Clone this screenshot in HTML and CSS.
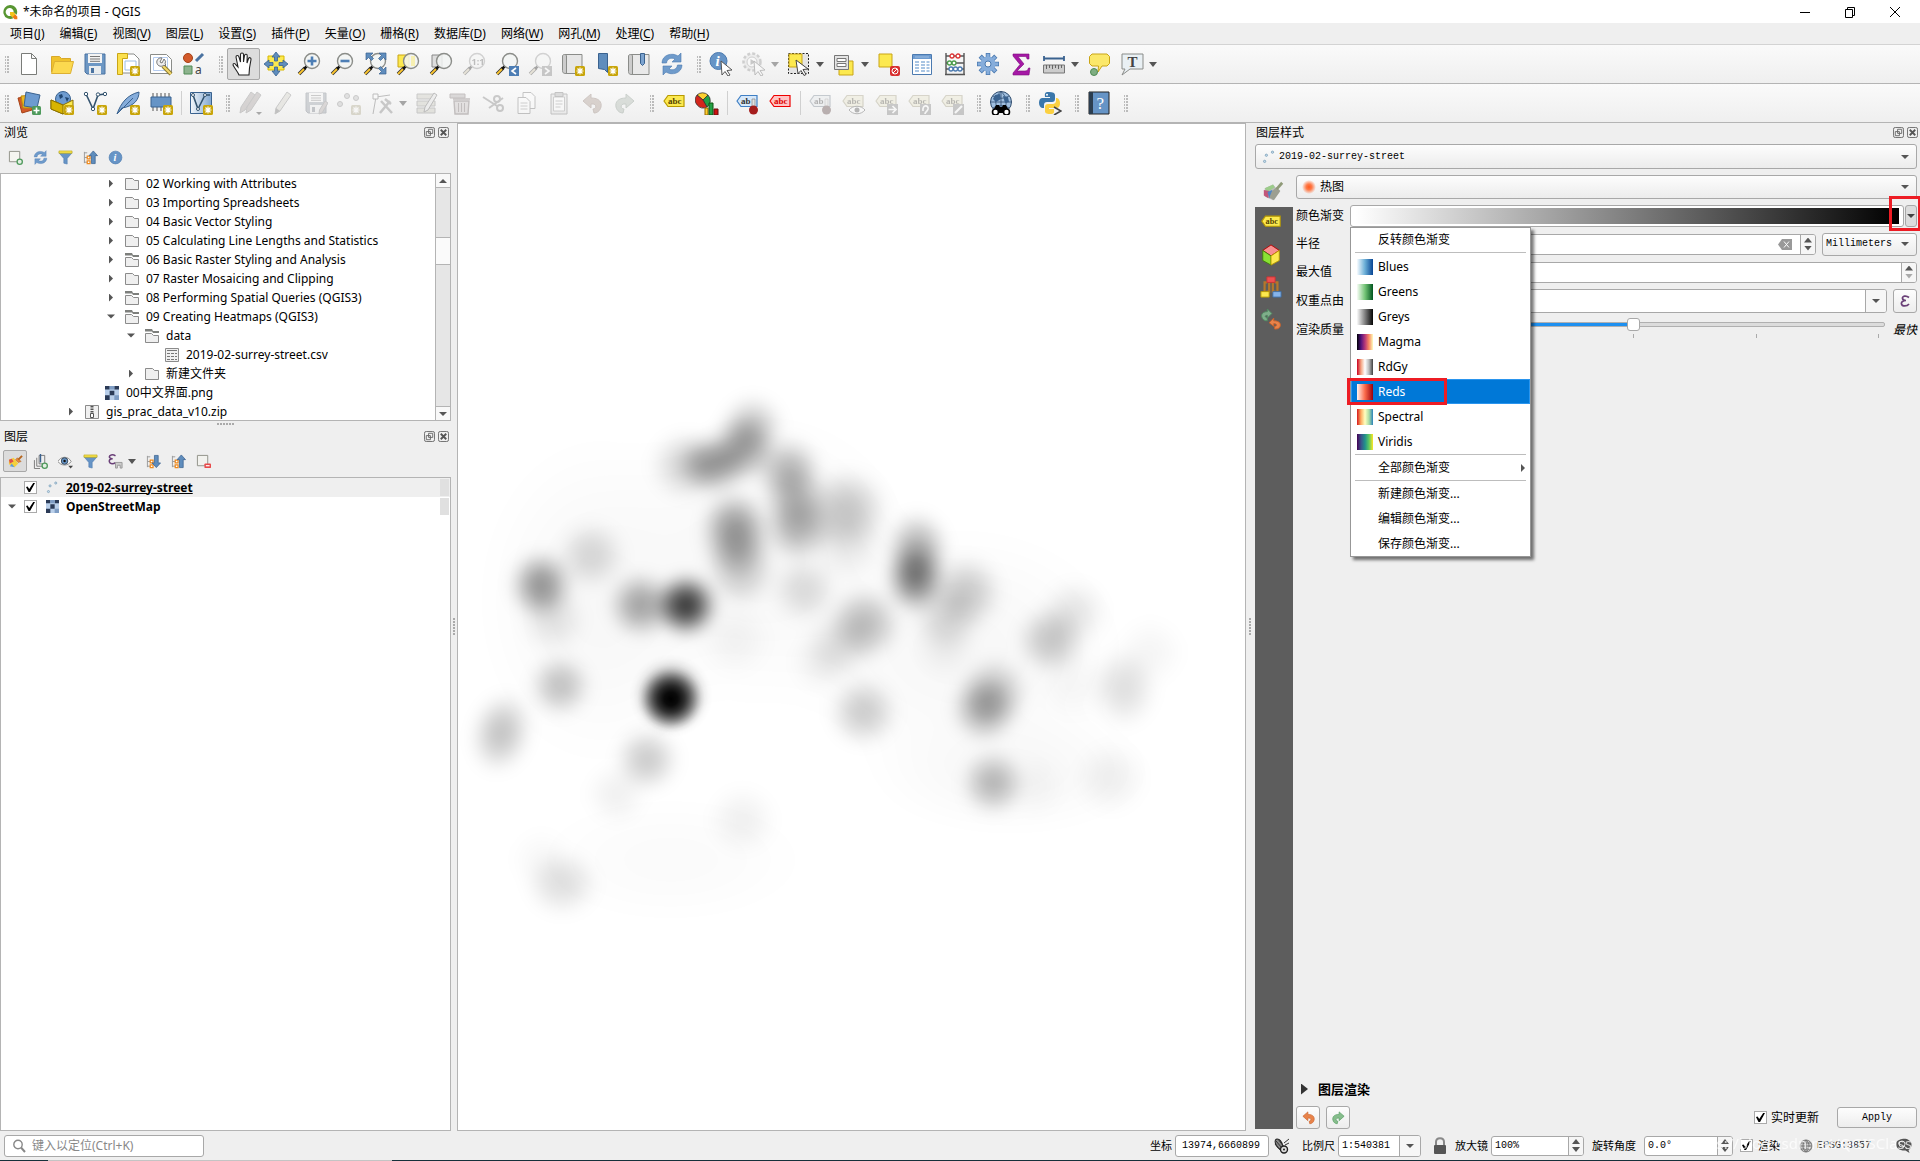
FILE: index.html
```html
<!DOCTYPE html>
<html lang="zh-CN">
<head>
<meta charset="utf-8">
<title>*未命名的项目 - QGIS</title>
<link rel="stylesheet" href="styles.css">
</head>
<body>
<svg class="defs" aria-hidden="true">
  <defs>
    <linearGradient id="g-ramp" x1="0" x2="1"><stop offset="0" stop-color="#f4f8fc"/><stop offset="1" stop-color="#7fa6d0"/></linearGradient>
    <radialGradient id="g-heat"><stop offset="0" stop-color="#ff5a1e"/><stop offset=".4" stop-color="#ff7a48"/><stop offset="1" stop-color="#ff7a48" stop-opacity="0"/></radialGradient>
    <radialGradient id="k">
      <stop offset="0" stop-opacity="1"/><stop offset=".2" stop-opacity=".92"/><stop offset=".4" stop-opacity=".7"/><stop offset=".5" stop-opacity=".55"/><stop offset=".6" stop-opacity=".4"/><stop offset=".7" stop-opacity=".25"/><stop offset=".8" stop-opacity=".12"/><stop offset=".9" stop-opacity=".035"/><stop offset="1" stop-opacity="0"/>
    </radialGradient>
    <filter id="soft" x="-10%" y="-10%" width="120%" height="120%"><feGaussianBlur stdDeviation="7"/></filter>
  </defs>
</svg>
<svg class="sprite" aria-hidden="true">
  <symbol id="badge" viewBox="0 0 24 24"><rect x="14" y="14" width="10" height="10" rx="1.500" fill="#c8a50a"/><path d="M19 15.500v7M15.500 19h7M16.500 16.500l5 5M21.500 16.500l-5 5" stroke="#fff" stroke-width="1.200"/></symbol>
  <symbol id="lens" viewBox="0 0 24 24"><path d="M2 22l6-6" stroke="#333" stroke-width="3.600"/><path d="M2 22l6-6" stroke="#fcc62f" stroke-width="1.800"/><path d="M7 17l3-3" stroke="#111" stroke-width="2.500"/><circle cx="15" cy="9" r="7.500" fill="#f2f4f3" fill-opacity=".85" stroke="#8b8d89" stroke-width="1.400"/></symbol>
  <symbol id="tag" viewBox="0 0 24 24"><path d="M2 10l4-5.500h16v11H6z" stroke-width="1.200"/></symbol>
  <symbol id="i-logo" viewBox="0 0 24 24"><path d="M12 1.500A10.500 10.500 0 1 0 17 21.500L14 17.500A6 6 0 1 1 17.500 12.500L22 16A10.500 10.500 0 0 0 12 1.500z" fill="#589632"/><path d="M12 12h5l6 7v4h-4l-7-7z" fill="#ee7913"/><path d="M12 12h5l3 3.500-4.500 4.500L12 16z" fill="#f0c419"/></symbol>
  <symbol id="i-new" viewBox="0 0 24 24"><path d="M4.500 1.500h10l5 5v16h-15zM14.500 1.500v5h5" fill="#fff" stroke="#7a7c79"/></symbol>
  <symbol id="i-open" viewBox="0 0 24 24"><path d="M1.500 20V4.500h8l2 2h9V10" fill="#f0c22c" stroke="#d8a92a"/><path d="M1.500 21.500l3-12h19l-3 12z" fill="#fcd94f" stroke="#dcb033"/></symbol>
  <symbol id="i-save" viewBox="0 0 24 24"><path d="M2 2h20v20H4l-2-2z" fill="#6d97c4" stroke="#4b73a1"/><path d="M5 2h14v9H5z" fill="#f4f4f4"/><path d="M7 4.500h10M7 7h10M7 9.300h10" stroke="#777"/><path d="M6 14h12v8H6z" fill="#e9ecee"/><path d="M8 16h3v5H8z" fill="#4b73a1"/></symbol>
  <symbol id="i-layout" viewBox="0 0 24 24"><path d="M4 2h14l5 5v14H4z" fill="#fff" stroke="#8a8c89"/><path d="M9 9h11v9H9z" fill="none" stroke="#9ebee0"/><path d="M1.500 1.500h10v5h-5v16h-5z" fill="#fbe04e" stroke="#c9a516"/><use href="#badge"/></symbol>
  <symbol id="i-layoutmgr" viewBox="0 0 24 24"><path d="M1.500 2.500h16l5 5v14h-21z" fill="#fff" stroke="#8a8c89"/><path d="M4.500 5.500h14v13h-14z" fill="none" stroke="#b5ccf0"/><path d="M14 14l8 8" stroke="#8a7a30" stroke-width="4"/><path d="M14 14l8 8" stroke="#f2d66a" stroke-width="2.200"/><path d="M13 6a4.200 4.200 0 1 0 2 7l1 1 1-1-1-1a4 4 0 0 0-1-5l-2 4-2-1z" fill="#eee" stroke="#777"/></symbol>
  <symbol id="i-style" viewBox="0 0 24 24"><circle cx="6" cy="6" r="4.500" fill="#d35a2a" stroke="#a54216"/><path d="M14 9l7-7" stroke="#4b73a1" stroke-width="3"/><path d="M2 14h8v8H2z" fill="#8db38d" stroke="#4f8a55"/><text x="13" y="22" font-size="12" font-family="Noto Sans" fill="#444">a</text></symbol>
  <symbol id="i-hand" viewBox="0 0 24 24"><path d="M8 23c-1-3-4-6-6-10 0-2 2-2 3 0l2 2L5 5c0-2 2.500-2 3 0l1.500 5V2.500c0-2 3-2 3 0V10l1-6.500c.5-2 3-1.500 2.700.5L16 11l1.500-4.500c.7-1.500 2.700-1 2.500 1L18.500 16 18 23z" fill="#fff" stroke="#222" stroke-width="1.100"/></symbol>
  <symbol id="i-panto" viewBox="0 0 24 24"><path d="M4 4h16v14H4z" fill="#fce94f" stroke="#d8b800"/><path d="M12 0l4 5h-2.500v4h-3V5H8zM12 24l4-5h-2.500v-4h-3v4H8zM0 12l5-4v2.500h4v3H5V16zM24 12l-5-4v2.500h-4v3h4V16z" fill="#5f8dbd" stroke="#3a628f" stroke-width=".8"/></symbol>
  <symbol id="i-zoomin" viewBox="0 0 24 24"><use href="#lens"/><path d="M15 4.500v9M10.500 9h9" stroke="#4d7eb5" stroke-width="2.600"/></symbol>
  <symbol id="i-zoomout" viewBox="0 0 24 24"><use href="#lens"/><path d="M10.500 9h9" stroke="#4d7eb5" stroke-width="2.600"/></symbol>
  <symbol id="i-zoomfull" viewBox="0 0 24 24"><use href="#lens"/><path d="M3 1h7L7.500 3.500l3 3-2 2-3-3L3 8zM23 1h-7l2.500 2.500-3 3 2 2 3-3L23 8zM23 22h-7l2.500-2.500-3-3 2-2 3 3L23 15z" fill="#5f8dbd" stroke="#3a628f" stroke-width=".7"/></symbol>
  <symbol id="i-zoomsel" viewBox="0 0 24 24"><path d="M2 3h11v12H2z" fill="#fce94f" stroke="#c9a516"/><use href="#lens"/><path d="M15 4h4v10h-4z" fill="#fce94f" opacity=".4"/></symbol>
  <symbol id="i-zoomlayer" viewBox="0 0 24 24"><path d="M3 3h10v12H3z" fill="#ddd" stroke="#888"/><use href="#lens"/></symbol>
  <symbol id="i-zoom11" viewBox="0 0 24 24"><use href="#lens"/><text x="9.500" y="12.500" font-size="9" font-weight="700" font-family="Noto Sans" fill="#555">1:1</text></symbol>
  <symbol id="i-zoomlast" viewBox="0 0 24 24"><use href="#lens"/><path d="M14 14h10v10H14z" fill="#4d7eb5"/><path d="M21 16l-4 3 4 3" fill="none" stroke="#fff" stroke-width="1.600"/></symbol>
  <symbol id="i-zoomnext" viewBox="0 0 24 24"><use href="#lens"/><path d="M14 14h10v10H14z" fill="#777"/><path d="M17 16l4 3-4 3" fill="none" stroke="#fff" stroke-width="1.600"/></symbol>
  <symbol id="i-mapview" viewBox="0 0 24 24"><path d="M4 2.500h17v19H4z" fill="#e6e6e6" stroke="#8a8c89"/><path d="M1.500 4c0-2 4-2 4 0v17.500c-2 0-4 0-4-3z" fill="#ccc" stroke="#8a8c89"/><use href="#badge"/></symbol>
  <symbol id="i-bookmark" viewBox="0 0 24 24"><path d="M4.500 1.500h9v19l-3-3-6-1z" fill="#5f8dbd" stroke="#3a628f"/><use href="#badge"/></symbol>
  <symbol id="i-bookmarks" viewBox="0 0 24 24"><path d="M4 2.500h18v20H4z" fill="#e9e9e9" stroke="#8a8c89"/><path d="M1.500 4c0-2 4-2 4 0v18.500c-2 0-4 0-4-3z" fill="#ccc" stroke="#8a8c89"/><path d="M13.500 1.500h4v10l-2 2-2-2z" fill="#7ca3cf" stroke="#3a628f"/></symbol>
  <symbol id="i-refresh" viewBox="0 0 24 24"><path d="M2 11C2 3 12 0 18 4l3-3v9h-9l3-3C11 5 7 7 6.500 11z" fill="#6f9bcb" stroke="#4b7ab0" stroke-width=".6"/><path d="M22 13c0 8-10 11-16 7l-3 3v-9h9l-3 3c4 2 8 0 8.500-4z" fill="#6f9bcb" stroke="#4b7ab0" stroke-width=".6"/></symbol>
  <symbol id="cursor" viewBox="0 0 24 24"><path d="M12 9l11 9-5 .5 3 4.500-2 1-3-4.500-3 3.500z" fill="#fff" stroke="#555"/></symbol>
  <symbol id="i-identify" viewBox="0 0 24 24"><circle cx="9.500" cy="9" r="8.500" fill="#6694c6" stroke="#4b7ab0"/><text x="6.500" y="14" font-size="15" font-style="italic" font-weight="700" font-family="Liberation Serif" fill="#fff">i</text><use href="#cursor"/></symbol>
  <symbol id="i-gear" viewBox="0 0 24 24"><path d="M12 1v22M1 12h22M4.200 4.200l15.600 15.600M19.800 4.200L4.200 19.800" stroke="#4b7ab0" stroke-width="4.500"/><path d="M12 1.700v20.600M1.700 12h20.600M4.700 4.700l14.600 14.600M19.300 4.700L4.700 19.300" stroke="#86addb" stroke-width="3"/><circle cx="12" cy="12" r="7.500" fill="#86addb"/><circle cx="12" cy="12" r="3" fill="#f5f5f5" stroke="#4b7ab0"/></symbol>
  <symbol id="i-action" viewBox="0 0 24 24"><circle cx="10" cy="10" r="8.500" fill="#ddd" stroke="#888" stroke-width="2.500" stroke-dasharray="3 2"/><circle cx="10" cy="10" r="5" fill="#fff" stroke="#888"/><path d="M8.500 7l5 3-5 3z" fill="#777"/><use href="#cursor"/></symbol>
  <symbol id="i-select" viewBox="0 0 24 24"><path d="M1.500 1.500h20v20h-20z" fill="#e4e4e4" stroke="#222" stroke-dasharray="2 1.500"/><path d="M2 2h13v13H2z" fill="#fce94f" stroke="#c9a516"/><path d="M9 8l12 9-5 .5 3 5-2 1-3-5-3 3z" fill="#fff" stroke="#444"/></symbol>
  <symbol id="i-selform" viewBox="0 0 24 24"><path d="M7 9h14v14H7z" fill="#fce94f" stroke="#c9a516"/><path d="M2.500 3.500h14v14h-14z" fill="#e4e4e4" stroke="#777"/><path d="M5 6.500h9v3H5zM5 11.500h9v3H5z" fill="#fff" stroke="#777"/></symbol>
  <symbol id="i-deselect" viewBox="0 0 24 24"><path d="M2 2h13v13H2z" fill="#fce94f" stroke="#c9a516"/><rect x="13" y="14" width="10" height="10" rx="2" fill="#d83030"/><circle cx="18" cy="19" r="3" fill="none" stroke="#fff"/><path d="M16 21l4-4" stroke="#fff"/></symbol>
  <symbol id="i-table" viewBox="0 0 24 24"><path d="M2.500 2.500h19v20h-19z" fill="#fff" stroke="#4b7ab0"/><path d="M3 3h18v4H3z" fill="#6d9bd0"/><path d="M5 10h4M11 10h4M16.500 10h3M5 13h4M11 13h4M16.500 13h3M5 16h4M11 16h4M16.500 16h3M5 19h4M11 19h4M16.500 19h3M5 5h14" stroke="#8db2da" stroke-width="1.400"/></symbol>
  <symbol id="i-abacus" viewBox="0 0 24 24"><path d="M3 1v21M21 1v21M2 22.500h20M3 4h18M3 11h18M3 17h18" stroke="#555" stroke-width="1.400"/><g fill="#fff" stroke-width="1.300"><g stroke="#d33"><circle cx="9" cy="4" r="2"/><circle cx="15" cy="4" r="2"/></g><g stroke="#4a9c4a"><circle cx="6.500" cy="11" r="2"/><circle cx="11" cy="11" r="2"/></g><g stroke="#4b7ab0"><circle cx="8" cy="17" r="2"/><circle cx="12.500" cy="17" r="2"/><circle cx="17" cy="17" r="2"/></g></g></symbol>
  <symbol id="i-sigma" viewBox="0 0 24 24"><path d="M4 2h16v5h-2c0-2-1-2.500-3-2.500H9L15 12l-7 7h8c2 0 3-1 3.500-3H21l-1 7H4v-2l7-8.500L4 4z" fill="#a518a5" stroke="#7c0d7c" stroke-width=".6"/></symbol>
  <symbol id="i-measure" viewBox="0 0 24 24"><path d="M2 6.500h20M2 4v5M22 4v5" stroke="#3a628f" stroke-width="1.800"/><path d="M1.500 13h21v8h-21z" fill="#ccc" stroke="#777"/><path d="M4.500 13v4M7.500 13v3M10.500 13v4M13.500 13v3M16.500 13v4M19.500 13v3" stroke="#666"/></symbol>
  <symbol id="i-tip" viewBox="0 0 24 24"><path d="M5 2h15l2.500 2.500v7L20 14h-5l-4 6 .5-6H5l-2.500-2.500v-7z" fill="#fbe86a" stroke="#c9a516"/><circle cx="7" cy="20" r="3.500" fill="#7fae82" stroke="#4f8a55"/></symbol>
  <symbol id="i-text" viewBox="0 0 24 24"><path d="M2 2h21v15H10l-8 6 3-6H2z" fill="#e9f0f4" stroke="#8a8c89"/><text x="7.500" y="15" font-size="15" font-weight="700" font-family="Liberation Serif" fill="#444">T</text></symbol>
  <symbol id="i-source" viewBox="0 0 24 24"><path d="M1 7l12-2 2 14-10 3z" fill="#d35a2a" stroke="#a54216"/><path d="M4 5l13-1v13H6z" fill="#f0b820" stroke="#b98a10"/><path d="M9 1l14 3-3 13-13-2z" fill="#6d9bd0" stroke="#3a628f"/><rect x="15" y="15" width="9" height="9" rx="1.500" fill="#4f9a5c"/><path d="M19.500 16.500v6M16.500 19.500h6" stroke="#fff" stroke-width="1.600"/></symbol>
  <symbol id="i-gpkg" viewBox="0 0 24 24"><circle cx="13" cy="8" r="7.500" fill="#6d9bd0" stroke="#3a628f"/><path d="M9 4l3-1 1 3-3 2zM15 6l4 1-2 4z" fill="#1f4570"/><path d="M1 9l12 5 10-5v8l-10 6-12-5z" fill="#fce94f" stroke="#8a7000"/><path d="M1 9l12 5v9L1 18z" fill="#d8b400" stroke="#8a7000"/><use href="#badge"/></symbol>
  <symbol id="i-shape" viewBox="0 0 24 24"><path d="M3 3l7 15 5-14 7-1" fill="none" stroke="#33536e" stroke-width="1.600"/><g fill="#fff" stroke="#33536e"><circle cx="3" cy="3" r="1.700"/><circle cx="10" cy="18" r="1.700"/><circle cx="15" cy="3.500" r="1.700"/><circle cx="22" cy="3" r="1.700"/></g><use href="#badge"/></symbol>
  <symbol id="i-feather" viewBox="0 0 24 24"><path d="M1 23C5 12 11 4 23 1c0 7-4 14-17 16z" fill="#86addb" stroke="#3a628f"/><path d="M1 23L17 7" stroke="#3a628f"/><use href="#badge"/></symbol>
  <symbol id="i-chip" viewBox="0 0 24 24"><path d="M4 2v18M8 2v18M12 2v18M16 2v18M20 2v18" stroke="#555"/><path d="M2 6h20v10H2z" fill="#6694c6" stroke="#3a628f"/><use href="#badge"/></symbol>
  <symbol id="i-virtual" viewBox="0 0 24 24"><path d="M1.500 1.500h21v21h-21z" fill="url(#g-ramp)" stroke="#3a628f"/><path d="M4 4l5 14 7-14 5 0" fill="none" stroke="#33536e" stroke-width="1.600"/><g fill="#fff" stroke="#33536e"><circle cx="4" cy="4" r="1.500"/><circle cx="9" cy="18" r="1.500"/><circle cx="16" cy="4" r="1.500"/></g><use href="#badge"/></symbol>
  <symbol id="i-pencil" viewBox="0 0 24 24"><path d="M16 1l4 3-11 16-5 3 1-6z" fill="#d8cf9a" stroke="#777"/><path d="M4 23l1-6 4 3z" fill="#666"/></symbol>
  <symbol id="i-pencils" viewBox="0 0 24 24"><path d="M13 1l4 3-10 15-5 3 1-6z" fill="#b98f86" stroke="#777"/><path d="M19 1l4 3-10 15-5 3 1-6z" fill="#b98f86" stroke="#777"/><path d="M18 21h6l-3 3z" fill="#222"/></symbol>
  <symbol id="i-saveedit" viewBox="0 0 24 24"><use href="#i-save"/><path d="M21 10l3 2-6 10-3 1 .5-4z" fill="#c79a92" stroke="#777"/></symbol>
  <symbol id="i-points" viewBox="0 0 24 24"><g fill="#bbb" stroke="#777"><circle cx="3" cy="13" r="2.500"/><circle cx="10" cy="5" r="2.500"/><circle cx="19" cy="7" r="2.500"/></g><use href="#badge"/></symbol>
  <symbol id="i-vertex" viewBox="0 0 24 24"><path d="M3 23L6 6 20 4" fill="none" stroke="#555"/><path d="M3 3h5v5H3z" fill="#fff" stroke="#555"/><path d="M10 22L20 10M11 10l11 12M15 8l6 5" stroke="#777" stroke-width="2.500"/></symbol>
  <symbol id="i-multi" viewBox="0 0 24 24"><path d="M2 3h18v5H2zM2 10h18v5H2zM2 17h18v5H2z" fill="#c9c48a" stroke="#777"/><path d="M19 2l3 2-9 15-4 2 1-5z" fill="#ddd" stroke="#555"/></symbol>
  <symbol id="i-delete" viewBox="0 0 24 24"><path d="M2 3h15v4H2z" fill="#b99" stroke="#855"/><path d="M6 10h15l-1 13H7zM5 8h17" fill="#d8b6b6" stroke="#855" stroke-width="1.400"/><path d="M10.500 12v9M13.500 12v9M16.500 12v9" stroke="#855"/></symbol>
  <symbol id="i-cut" viewBox="0 0 24 24"><path d="M2 6l14 9M8 17l14-10" stroke="#777" stroke-width="2"/><circle cx="19" cy="17" r="3" fill="none" stroke="#777" stroke-width="2"/><circle cx="16" cy="8" r="3" fill="none" stroke="#777" stroke-width="2"/></symbol>
  <symbol id="i-copy" viewBox="0 0 24 24"><path d="M9 1.500h8l4 4v12H9z" fill="#fff" stroke="#666"/><path d="M4 6.500h8l4 4v12H4z" fill="#fff" stroke="#666"/><path d="M6.500 12h7M6.500 15h7M6.500 18h7" stroke="#888"/></symbol>
  <symbol id="i-paste" viewBox="0 0 24 24"><path d="M4 3h16v20H4z" fill="#ddd" stroke="#666"/><path d="M6.500 6h11v14h-11z" fill="#fff" stroke="#888"/><path d="M8 1.500h8v4H8z" fill="#aaa" stroke="#666"/><path d="M8.500 10h7M8.500 13h7M8.500 16h5" stroke="#888"/></symbol>
  <symbol id="i-undo" viewBox="0 0 24 24"><path d="M3 10l8-7v4c8 0 11 4 10 9-1 4-4 6-7 6l-1-4c4 0 4-6-2-5v4z" fill="#e8834a" stroke="#c9612a"/></symbol>
  <symbol id="i-redo" viewBox="0 0 24 24"><path d="M21 10l-8-7v4C5 7 2 11 3 16c1 4 4 6 7 6l1-4c-4 0-4-6 2-5v4z" fill="#86bd8c" stroke="#4f9a5c"/></symbol>
  <symbol id="i-label" viewBox="0 0 24 24"><use href="#tag" fill="#fce94f" stroke="#b89a00"/><text x="6" y="13" font-size="9" font-weight="700" font-family="Liberation Serif" fill="#554400">abc</text></symbol>
  <symbol id="i-diagram" viewBox="0 0 24 24"><path d="M8 9L2 4a8 8 0 0 1 11 0z" fill="#fcd02f" stroke="#333" stroke-width=".8"/><path d="M8 9l5-5a8 8 0 0 1-1 12z" fill="#22a045" stroke="#333" stroke-width=".8"/><path d="M8 9l4 7A8 8 0 0 1 2 4z" fill="#d3261c" stroke="#333" stroke-width=".8"/><path d="M10 17h3v7h-3z" fill="#fcd02f" stroke="#960"/><path d="M14 12h4v12h-4z" fill="#22a045" stroke="#151"/><path d="M19 18h4v6h-4z" fill="#c11" stroke="#611"/></symbol>
  <symbol id="i-pin" viewBox="0 0 24 24"><use href="#tag" fill="#d6e8fa" stroke="#3f7fc4"/><text x="6" y="13" font-size="9" font-weight="700" font-family="Liberation Serif" fill="#333">ab</text><path d="M17 8h3v8h-3z" fill="#e0e0e0" stroke="#777" stroke-width=".6"/><circle cx="18.500" cy="19" r="4.500" fill="#a51d1d"/></symbol>
  <symbol id="i-unplaced" viewBox="0 0 24 24"><use href="#tag" fill="#ffc4c4" stroke="#e00"/><text x="6" y="13" font-size="9" font-weight="700" font-family="Liberation Serif" fill="#d00">abc</text></symbol>
  <symbol id="i-lshow" viewBox="0 0 24 24"><use href="#i-label"/><path d="M8 19c4-5 12-5 16 0-4 5-12 5-16 0z" fill="#fff" stroke="#444"/><circle cx="16" cy="19" r="2.500" fill="#444"/></symbol>
  <symbol id="i-lmove" viewBox="0 0 24 24"><use href="#i-label"/><path d="M13 13h11v11H13z" fill="#777"/><path d="M14.500 18.500h7M18.500 15l3.500 3.500-3.500 3.500" fill="none" stroke="#fff" stroke-width="1.700"/></symbol>
  <symbol id="i-lrot" viewBox="0 0 24 24"><use href="#i-label"/><path d="M13 13h11v11H13z" fill="#777"/><path d="M16 20c-1-7 6-6 5-2-1 3-3 3-3 5" fill="none" stroke="#fff" stroke-width="1.700"/></symbol>
  <symbol id="i-ledit" viewBox="0 0 24 24"><use href="#i-label"/><path d="M13 13h11v11H13z" fill="#777"/><path d="M15 22l7-7" stroke="#fff" stroke-width="2.200"/></symbol>
  <symbol id="i-globe" viewBox="0 0 24 24"><circle cx="12" cy="11" r="10.500" fill="#9fbfe0" stroke="#2d4a6c"/><path d="M12 .5v21M2 11h20M4 5c5 3 11 3 16 0M4 17c5-3 11-3 16 0M12 .5c-7 6-7 15 0 21M12 .5c7 6 7 15 0 21" stroke="#2d4a6c" fill="none" stroke-width=".8"/><path d="M6 4l5-1 1 5-5 3-3-3zM14 5l5 1 1 5-4 1z" fill="#3a628f"/><path d="M3 22l4-8h3l1 2h2l1-2h3l4 8z" fill="#000"/><circle cx="6.500" cy="21" r="3" fill="#fff" stroke="#000" stroke-width="1.600"/><circle cx="17.500" cy="21" r="3" fill="#fff" stroke="#000" stroke-width="1.600"/></symbol>
  <symbol id="i-python" viewBox="0 0 24 24"><path d="M11 1c-5 0-4 2-4 5h5v1H4c-4 0-4 9 0 10h2v-3c0-2 1-3 3-3h5c2 0 3-1 3-3V4c0-2-2-3-6-3z" fill="#3a77ab"/><path d="M12 23c5 0 4-2 4-5h-5v-1h8c4 0 4-9 0-10h-1v3c0 2-2 3-3 3h-5c-2 0-3 1-3 3v4c0 2 1 3 5 3z" fill="#fbd040"/><circle cx="9" cy="3.800" r="1" fill="#fff"/><path d="M16 16l7 4-7 4" fill="none" stroke="#444" stroke-width="1.600"/></symbol>
  <symbol id="i-help" viewBox="0 0 24 24"><path d="M2 1h20v22H2z" fill="#6694c6" stroke="#222"/><path d="M2 1h4v22H2z" fill="#2c3e50"/><text x="9.500" y="18" font-size="17" font-family="Liberation Serif" fill="#fff">?</text></symbol>
  <symbol id="i-addlayer" viewBox="0 0 16 16"><path d="M1.500 1.500h11v11h-11z" fill="#f5f5f0" stroke="#8f9086"/><circle cx="12.500" cy="12.500" r="2.800" fill="#e4efe4" stroke="#4f9a5c" stroke-width="1.400"/></symbol>
  <symbol id="i-filter" viewBox="0 0 16 16"><path d="M1 3h14L9.800 9v6l-3.600-1V9z" fill="#6694c6" stroke="#4b7ab0" stroke-width=".6"/><path d="M1 1h14v2.500H1z" fill="#f5e04a" stroke="#b9a516" stroke-width=".6"/></symbol>
  <symbol id="i-collapse" viewBox="0 0 16 16"><path d="M1.500 2v12M1.500 3h3M1.500 8h3M1.500 13h3" stroke="#999"/><path d="M4.500 6.500h3v3h-3zM4.500 11.500h3v3h-3z" fill="#fff" stroke="#f08a1c" stroke-width="1.300"/><path d="M11 1l4.500 5H13v8.500H9V6H6.500z" fill="#5f8dbd" stroke="#3a628f" stroke-width=".8"/></symbol>
  <symbol id="i-expand" viewBox="0 0 16 16"><path d="M1.500 2v12M1.500 3h3M1.500 8h3M1.500 13h3" stroke="#999"/><path d="M4.500 6.500h3v3h-3zM4.500 11.500h3v3h-3z" fill="#fff" stroke="#f08a1c" stroke-width="1.300"/><path d="M11 14.500l4.500-5H13V1.500H9v8H6.500z" fill="#5f8dbd" stroke="#3a628f" stroke-width=".8"/></symbol>
  <symbol id="i-info" viewBox="0 0 16 16"><circle cx="8" cy="8" r="6.800" fill="#6694c6" stroke="#4b7ab0" stroke-width=".7"/><text x="5.800" y="12" font-size="11" font-style="italic" font-weight="700" font-family="Liberation Serif" fill="#fff">i</text></symbol>
  <symbol id="i-brush" viewBox="0 0 16 16"><path d="M1 6l5-2 5 6-4 4-6-3z" fill="#f4d03c"/><path d="M1 6l3-1 2 3-4 2z" fill="#e0504a"/><path d="M4 10l3 4-5-1z" fill="#5f9bd6"/><path d="M8 6l3 3 3-1-4-4z" fill="#e88a3a" stroke="#a85a1a" stroke-width=".5"/><path d="M11 6l4-4" stroke="#b5651d" stroke-width="2"/></symbol>
  <symbol id="i-paint" viewBox="0 0 24 24"><path d="M3 9l9-4 7 8-7 9-9-4z" fill="#bbb"/><path d="M3 9l9-4 2 3-8 5z" fill="#9ccc8a"/><path d="M2 11l6 1-1 8-5-3z" fill="#c2577a"/><path d="M6 13l5-2 2 5-5 4z" fill="#4f86c6"/><path d="M11 12l5-4 4 4-7 10-5-3z" fill="#9c9f92"/><path d="M16 10l6-7" stroke="#8f9a78" stroke-width="3"/></symbol>
  <symbol id="i-group" viewBox="0 0 16 16"><path d="M6.500 1.500h6v9h-6zM4 4v9h6M1.500 6.500v9h6" fill="none" stroke="#777"/><path d="M8 0v9" stroke="#3a628f" stroke-width="1.500"/><circle cx="12.500" cy="12.500" r="2.800" fill="#e4efe4" stroke="#4f9a5c" stroke-width="1.400"/></symbol>
  <symbol id="i-eye" viewBox="0 0 16 16"><path d="M0 8c3-6 11-6 14 0-3 5-11 5-14 0z" fill="#fff" stroke="#888"/><circle cx="7" cy="7.500" r="3.500" fill="#6694c6" stroke="#345"/><circle cx="7" cy="7.500" r="1.300" fill="#111"/><path d="M11 12.500h5l-2.500 3z" fill="#444"/></symbol>
  <symbol id="i-expr" viewBox="0 0 16 16"><path d="M8 2C5 0 1 1 1.500 3.500 2 5 4 5 5 5 2 5 1 6.500 1.500 8.500 2 11 6 11 8 9" fill="none" stroke="#6a4078" stroke-width="1.600"/><path d="M8 9h7v6h-2v-3h-3v3H8z" fill="#ccc" stroke="#999"/></symbol>
  <symbol id="i-remove" viewBox="0 0 16 16"><path d="M1.500 1.500h11v11h-11z" fill="#f2f2ee" stroke="#8f9086"/><rect x="9" y="10" width="7" height="5" rx="1" fill="#e84a4a"/><path d="M10.500 12.500h4" stroke="#fff" stroke-width="1.300"/></symbol>
  <symbol id="i-folder" viewBox="0 0 14 14"><path d="M.5 1.500h7l2 2h4v9H.5z" fill="#efefef" stroke="#8b8b8b"/></symbol>
  <symbol id="i-folderfull" viewBox="0 0 14 14"><path d="M0 0h7l1 2h6v2H8L7 2.500H0z" fill="#7d7f7c"/><path d="M.5 4.500h6l2 2h5v7H.5z" fill="#efefef" stroke="#8b8b8b"/></symbol>
  <symbol id="i-csv" viewBox="0 0 14 14"><path d="M.5.5h13v13H.5z" fill="#f0f0f0" stroke="#8b8b8b"/><path d="M2 2.500h10M2 5.500h3M6 5.500h3M10 5.500h2M2 8.500h3M6 8.500h3M10 8.500h2M2 11.500h3M6 11.500h3M10 11.500h2" stroke="#777"/></symbol>
  <symbol id="i-zip" viewBox="0 0 14 14"><path d="M.5.5h13v13H.5z" fill="#f0f0f0" stroke="#8b8b8b"/><path d="M7 1v7" stroke="#555" stroke-width="3" stroke-dasharray="1.500 1"/><path d="M5.500 8.500h3v4h-3z" fill="#fff" stroke="#555"/></symbol>
  <symbol id="i-raster" viewBox="0 0 12 12"><path d="M0 0h12v12H0z" fill="#b9cfea"/><path d="M0 0h4v3H0zM8 0h4v3H8zM4 4h4v4H4zM0 8h4v4H0z" fill="#2b3b57"/><path d="M4 0h4v3H4zM8 8h4v4H8z" fill="#7f9dc4"/></symbol>
  <symbol id="i-dots" viewBox="0 0 16 16"><g fill="#c8dcec" stroke="#7fa3bb"><circle cx="3" cy="13" r="1.300"/><circle cx="5" cy="6" r="1.300"/><circle cx="12" cy="2.500" r="1.300"/></g></symbol>
  <symbol id="i-float" viewBox="0 0 12 12"><rect x=".5" y=".5" width="11" height="11" rx="2" fill="none" stroke="#666"/><path d="M5 2.500h4.500V7H5zM2.500 5H7v4.500H2.500z" fill="#f0f0f0" stroke="#666"/></symbol>
  <symbol id="i-close" viewBox="0 0 12 12"><rect x=".5" y=".5" width="11" height="11" rx="2" fill="none" stroke="#666"/><path d="M3 3l6 6M9 3l-6 6" stroke="#555" stroke-width="2"/></symbol>
  <symbol id="i-cube" viewBox="0 0 24 24"><path d="M12 1l9 6-9 6-9-6z" fill="#f79090" stroke="#b00"/><path d="M3 7l9 6v10l-9-5z" fill="#8ae234" stroke="#3f7f0a"/><path d="M21 7l-9 6v10l9-5z" fill="#fce94f" stroke="#b89a00"/></symbol>
  <symbol id="i-struct" viewBox="0 0 24 24"><path d="M5 18V7h3M19 18V7h-3M10 7v10H7M14 7v10h3" fill="none" stroke="#b5772a" stroke-width="2.400"/><path d="M7.500 1h9v6h-9z" fill="#ef5050" stroke="#c33"/><path d="M1 17h9v6H1z" fill="#fce94f" stroke="#b89a00"/><path d="M14 17h9v6h-9z" fill="#86b4ea" stroke="#3f6fa4"/></symbol>
  <symbol id="i-history" viewBox="0 0 24 24"><path d="M13 6L8 1v3C3 4 1 7 2 10c1 3 3 4 6 4v-3c-3-1-3-3 0-3v3z" fill="#7fae8a" stroke="#4f8a60"/><path d="M10 16l5-5v3c6 0 8 3 7 6-1 3-4 3-6 3v-3c3 0 3-3-1-3v3z" fill="#e8834a" stroke="#c9612a"/></symbol>
  <symbol id="i-search" viewBox="0 0 14 14"><circle cx="6" cy="5.500" r="4.200" fill="none" stroke="#888" stroke-width="1.400"/><path d="M9 8.500l4 4.500" stroke="#888" stroke-width="2"/></symbol>
  <symbol id="i-eps" viewBox="0 0 12 12"><path d="M10 2.500C7 0 3 1 3.500 3.500 3.800 5 5.500 5.500 7 5.500 4 5.500 2 7 2.500 9 3 11.500 8 11.500 10 9" fill="none" stroke="#6a4078" stroke-width="1.700"/></symbol>
  <symbol id="i-lock" viewBox="0 0 14 18"><path d="M3 9V5c0-5 8-5 8 0v4" fill="none" stroke="#888" stroke-width="2"/><rect x="1" y="8" width="12" height="9" rx="1" fill="#555"/></symbol>
  <symbol id="i-mouse" viewBox="0 0 16 16"><ellipse cx="5" cy="6" rx="3" ry="5.500" transform="rotate(-30 5 6)" fill="#888" stroke="#222" stroke-width="1.200"/><path d="M2 3l6 7M4 1l6 8M1 6l6 7" stroke="#333"/><circle cx="10" cy="11.500" r="3.500" fill="#ddd" stroke="#222" stroke-width="1.400"/><circle cx="10" cy="11.500" r="1" fill="#222"/><path d="M10 5l5-4M11 7l4-2" stroke="#333"/></symbol>
  <symbol id="i-crs" viewBox="0 0 14 14"><circle cx="7" cy="7" r="6" fill="#ccc" stroke="#777"/><path d="M7 1v12M1 7h12M2 4h10M2 10h10M7 1C3 4 3 10 7 13M7 1c4 3 4 9 0 12" fill="none" stroke="#777"/></symbol>
  <symbol id="i-msg" viewBox="0 0 18 16"><path d="M7 1c4-1 9 1 9.500 5 .3 3-1 5-3 6l1 3-4-2.500C5 13 1 10 1 6.500 1 3.500 3.500 1.500 7 1z" fill="#555"/><circle cx="7" cy="6" r="3" fill="none" stroke="#ddd"/><path d="M9 8l3 2.500" stroke="#ddd"/></symbol>
</svg>

<header class="titlebar">
  <svg class="s16"><use href="#i-logo"/></svg>
  <h1>*未命名的项目 - QGIS</h1>
  <div class="winctl">
    <button aria-label="最小化"><svg viewBox="0 0 12 12"><path d="M1 6.500h10" stroke="#000"/></svg></button>
    <button aria-label="还原"><svg viewBox="0 0 12 12"><path d="M1.500 3.500h7v8h-7zM3.500 3.500v-2h7v8h-2" fill="none" stroke="#000"/></svg></button>
    <button aria-label="关闭"><svg viewBox="0 0 12 12"><path d="M1 1l10 10M11 1L1 11" stroke="#000"/></svg></button>
  </div>
</header>

<nav class="menubar">
  <button>项目(<u>J</u>)</button><button>编辑(<u>E</u>)</button><button>视图(<u>V</u>)</button><button>图层(<u>L</u>)</button><button>设置(<u>S</u>)</button><button>插件(<u>P</u>)</button><button>矢量(<u>O</u>)</button><button>栅格(<u>R</u>)</button><button>数据库(<u>D</u>)</button><button>网络(<u>W</u>)</button><button>网孔(<u>M</u>)</button><button>处理(<u>C</u>)</button><button>帮助(<u>H</u>)</button>
</nav>

<div class="toolbar">
  <i class="grip first"></i>
  <button class="tool" aria-label="新建"><svg><use href="#i-new"/></svg></button>
  <button class="tool" aria-label="打开"><svg><use href="#i-open"/></svg></button>
  <button class="tool" aria-label="保存"><svg><use href="#i-save"/></svg></button>
  <button class="tool" aria-label="新建布局"><svg><use href="#i-layout"/></svg></button>
  <button class="tool" aria-label="布局管理"><svg><use href="#i-layoutmgr"/></svg></button>
  <button class="tool" aria-label="样式管理"><svg><use href="#i-style"/></svg></button>
  <i class="grip"></i>
  <button class="tool on" aria-label="平移"><svg><use href="#i-hand"/></svg></button>
  <button class="tool" aria-label="平移到选择"><svg><use href="#i-panto"/></svg></button>
  <button class="tool" aria-label="放大"><svg><use href="#i-zoomin"/></svg></button>
  <button class="tool" aria-label="缩小"><svg><use href="#i-zoomout"/></svg></button>
  <button class="tool" aria-label="全图"><svg><use href="#i-zoomfull"/></svg></button>
  <button class="tool" aria-label="缩放到选择"><svg><use href="#i-zoomsel"/></svg></button>
  <button class="tool" aria-label="缩放到图层"><svg><use href="#i-zoomlayer"/></svg></button>
  <button class="tool" disabled aria-label="原始分辨率"><svg><use href="#i-zoom11"/></svg></button>
  <button class="tool" aria-label="上一视图"><svg><use href="#i-zoomlast"/></svg></button>
  <button class="tool" disabled aria-label="下一视图"><svg><use href="#i-zoomnext"/></svg></button>
  <button class="tool" aria-label="新地图视图"><svg><use href="#i-mapview"/></svg></button>
  <button class="tool" aria-label="新建书签"><svg><use href="#i-bookmark"/></svg></button>
  <button class="tool" aria-label="显示书签"><svg><use href="#i-bookmarks"/></svg></button>
  <button class="tool" aria-label="刷新"><svg><use href="#i-refresh"/></svg></button>
  <i class="grip"></i>
  <button class="tool" aria-label="识别"><svg><use href="#i-identify"/></svg></button>
  <button class="tool drop" disabled aria-label="动作"><svg><use href="#i-action"/></svg></button>
  <button class="tool drop" aria-label="选择"><svg><use href="#i-select"/></svg></button>
  <button class="tool drop" aria-label="按值选择"><svg><use href="#i-selform"/></svg></button>
  <button class="tool" aria-label="取消选择"><svg><use href="#i-deselect"/></svg></button>
  <button class="tool" aria-label="属性表"><svg><use href="#i-table"/></svg></button>
  <button class="tool" aria-label="字段计算器"><svg><use href="#i-abacus"/></svg></button>
  <button class="tool" aria-label="工具箱"><svg><use href="#i-gear"/></svg></button>
  <button class="tool" aria-label="统计"><svg><use href="#i-sigma"/></svg></button>
  <button class="tool drop" aria-label="测量"><svg><use href="#i-measure"/></svg></button>
  <button class="tool" aria-label="地图提示"><svg><use href="#i-tip"/></svg></button>
  <button class="tool drop" aria-label="文字注记"><svg><use href="#i-text"/></svg></button>
</div>

<div class="toolbar">
  <i class="grip first"></i>
  <button class="tool" aria-label="数据源管理"><svg><use href="#i-source"/></svg></button>
  <button class="tool" aria-label="新建GeoPackage"><svg><use href="#i-gpkg"/></svg></button>
  <button class="tool" aria-label="新建Shapefile"><svg><use href="#i-shape"/></svg></button>
  <button class="tool" aria-label="新建SpatiaLite"><svg><use href="#i-feather"/></svg></button>
  <button class="tool" aria-label="临时图层"><svg><use href="#i-chip"/></svg></button>
  <i class="sep"></i>
  <button class="tool" aria-label="虚拟图层"><svg><use href="#i-virtual"/></svg></button>
  <i class="grip"></i>
  <button class="tool" disabled aria-label="当前编辑"><svg><use href="#i-pencils"/></svg></button>
  <button class="tool" disabled aria-label="切换编辑"><svg><use href="#i-pencil"/></svg></button>
  <button class="tool" disabled aria-label="保存编辑"><svg><use href="#i-saveedit"/></svg></button>
  <button class="tool" disabled aria-label="添加要素"><svg><use href="#i-points"/></svg></button>
  <button class="tool drop" disabled aria-label="顶点工具"><svg><use href="#i-vertex"/></svg></button>
  <button class="tool" disabled aria-label="修改属性"><svg><use href="#i-multi"/></svg></button>
  <button class="tool" disabled aria-label="删除"><svg><use href="#i-delete"/></svg></button>
  <button class="tool" disabled aria-label="剪切"><svg><use href="#i-cut"/></svg></button>
  <button class="tool" disabled aria-label="复制"><svg><use href="#i-copy"/></svg></button>
  <button class="tool" disabled aria-label="粘贴"><svg><use href="#i-paste"/></svg></button>
  <button class="tool" disabled aria-label="撤销"><svg><use href="#i-undo"/></svg></button>
  <button class="tool" disabled aria-label="重做"><svg><use href="#i-redo"/></svg></button>
  <i class="grip"></i>
  <button class="tool" aria-label="标注"><svg><use href="#i-label"/></svg></button>
  <button class="tool" aria-label="图表"><svg><use href="#i-diagram"/></svg></button>
  <i class="sep"></i>
  <button class="tool" aria-label="固定标注"><svg><use href="#i-pin"/></svg></button>
  <button class="tool" aria-label="未放置标注"><svg><use href="#i-unplaced"/></svg></button>
  <i class="sep"></i>
  <button class="tool" disabled aria-label="固定"><svg><use href="#i-pin"/></svg></button>
  <button class="tool" disabled aria-label="显隐标注"><svg><use href="#i-lshow"/></svg></button>
  <button class="tool" disabled aria-label="移动标注"><svg><use href="#i-lmove"/></svg></button>
  <button class="tool" disabled aria-label="旋转标注"><svg><use href="#i-lrot"/></svg></button>
  <button class="tool" disabled aria-label="修改标注"><svg><use href="#i-ledit"/></svg></button>
  <i class="grip"></i>
  <button class="tool" aria-label="搜索目录"><svg><use href="#i-globe"/></svg></button>
  <i class="grip"></i>
  <button class="tool" aria-label="Python"><svg><use href="#i-python"/></svg></button>
  <i class="grip"></i>
  <button class="tool" aria-label="帮助"><svg><use href="#i-help"/></svg></button>
  <i class="grip"></i>
</div>

<main class="work">
  <aside class="left">
    <section class="browser">
      <header class="dockhead"><h2>浏览</h2><button aria-label="浮动"><svg><use href="#i-float"/></svg></button><button aria-label="关闭"><svg><use href="#i-close"/></svg></button></header>
      <div class="docktools">
        <button aria-label="添加"><svg><use href="#i-addlayer"/></svg></button>
        <button aria-label="刷新"><svg><use href="#i-refresh"/></svg></button>
        <button aria-label="过滤"><svg><use href="#i-filter"/></svg></button>
        <button aria-label="折叠"><svg><use href="#i-collapse"/></svg></button>
        <button aria-label="属性"><svg><use href="#i-info"/></svg></button>
      </div>
      <div class="treebox">
        <ul class="tree">
          <li class="l5"><b class="tw"></b><svg><use href="#i-folder"/></svg>02 Working with Attributes</li>
          <li class="l5"><b class="tw"></b><svg><use href="#i-folder"/></svg>03 Importing Spreadsheets</li>
          <li class="l5"><b class="tw"></b><svg><use href="#i-folder"/></svg>04 Basic Vector Styling</li>
          <li class="l5"><b class="tw"></b><svg><use href="#i-folder"/></svg>05 Calculating Line Lengths and Statistics</li>
          <li class="l5"><b class="tw"></b><svg><use href="#i-folderfull"/></svg>06 Basic Raster Styling and Analysis</li>
          <li class="l5"><b class="tw"></b><svg><use href="#i-folder"/></svg>07 Raster Mosaicing and Clipping</li>
          <li class="l5"><b class="tw"></b><svg><use href="#i-folderfull"/></svg>08 Performing Spatial Queries (QGIS3)</li>
          <li class="l5"><b class="tw open"></b><svg><use href="#i-folderfull"/></svg>09 Creating Heatmaps (QGIS3)</li>
          <li class="l6"><b class="tw open"></b><svg><use href="#i-folderfull"/></svg>data</li>
          <li class="l7"><b class="tw none"></b><svg><use href="#i-csv"/></svg>2019-02-surrey-street.csv</li>
          <li class="l6"><b class="tw"></b><svg><use href="#i-folder"/></svg>新建文件夹</li>
          <li class="l4"><b class="tw none"></b><svg><use href="#i-raster"/></svg>00中文界面.png</li>
          <li class="l3"><b class="tw"></b><svg><use href="#i-zip"/></svg>gis_prac_data_v10.zip</li>
        </ul>
        <div class="scroll"><button class="up" aria-label="向上"></button><i class="before"></i><i class="thumb"></i><i class="after"></i><button class="down" aria-label="向下"></button></div>
      </div>
    </section>
    <i class="hsplit"></i>
    <section class="layers">
      <header class="dockhead"><h2>图层</h2><button aria-label="浮动"><svg><use href="#i-float"/></svg></button><button aria-label="关闭"><svg><use href="#i-close"/></svg></button></header>
      <div class="docktools">
        <button class="on" aria-label="图层样式"><svg><use href="#i-brush"/></svg></button>
        <button aria-label="添加组"><svg><use href="#i-group"/></svg></button>
        <button aria-label="可见性"><svg><use href="#i-eye"/></svg></button>
        <button aria-label="过滤"><svg><use href="#i-filter"/></svg></button>
        <button class="drop" aria-label="表达式过滤"><svg><use href="#i-expr"/></svg></button>
        <button aria-label="展开"><svg><use href="#i-expand"/></svg></button>
        <button aria-label="折叠"><svg><use href="#i-collapse"/></svg></button>
        <button aria-label="移除"><svg><use href="#i-remove"/></svg></button>
      </div>
      <ul class="tree layerlist">
        <li class="current"><b class="tw none"></b><label><input type="checkbox" checked><svg><use href="#i-dots"/></svg><span><u>2019-02-surrey-street</u></span></label><i></i></li>
        <li><b class="tw open"></b><label><input type="checkbox" checked><svg><use href="#i-raster"/></svg><span>OpenStreetMap</span></label><i></i></li>
      </ul>
    </section>
  </aside>
  <i class="vsplit"></i>
  <section class="canvas">
    <svg viewBox="457 123 788 1008" preserveAspectRatio="xMidYMin meet" fill="url(#k)">
      <g opacity=".03"><ellipse cx="600" cy="600" rx="150" ry="200"/><ellipse cx="760" cy="560" rx="190" ry="180"/><ellipse cx="960" cy="650" rx="200" ry="150"/><ellipse cx="1010" cy="770" rx="170" ry="80"/><ellipse cx="670" cy="860" rx="170" ry="80" opacity=".6"/></g>
      <circle cx="670" cy="699" r="34"/><circle cx="670" cy="696" r="42" opacity=".5"/>
      <g filter="url(#soft)">
      <circle cx="686" cy="605" r="36" opacity=".72"/><circle cx="682" cy="606" r="32" opacity=".3"/><circle cx="640" cy="605" r="38" opacity=".36"/>
      <ellipse cx="540" cy="585" rx="36" ry="39" opacity=".43"/><circle cx="590" cy="555" r="40" opacity=".15"/><circle cx="552" cy="620" r="38" opacity=".1"/>
      <circle cx="559" cy="686" r="36" opacity=".24"/><ellipse cx="500" cy="733" rx="34" ry="46" opacity=".24" transform="rotate(15 500 733)"/><circle cx="646" cy="760" r="37" opacity=".21"/><circle cx="615" cy="795" r="36" opacity=".06"/>
      <ellipse cx="712" cy="464" rx="40" ry="34" opacity=".4"/><circle cx="742" cy="448" r="38" opacity=".36"/><circle cx="752" cy="426" r="36" opacity=".22"/><circle cx="684" cy="465" r="40" opacity=".16"/>
      <ellipse cx="735" cy="535" rx="40" ry="46" opacity=".38"/><ellipse cx="740" cy="568" rx="40" ry="44" opacity=".2"/><circle cx="732" cy="518" r="36" opacity=".1"/>
      <circle cx="788" cy="470" r="38" opacity=".28"/><circle cx="795" cy="498" r="38" opacity=".24"/><circle cx="798" cy="526" r="40" opacity=".3"/>
      <circle cx="846" cy="510" r="48" opacity=".22"/><circle cx="848" cy="545" r="42" opacity=".07"/><circle cx="804" cy="590" r="38" opacity=".13"/>
      <ellipse cx="915" cy="578" rx="34" ry="40" opacity=".52"/><ellipse cx="917" cy="550" rx="36" ry="44" opacity=".32"/>
      <circle cx="966" cy="592" r="42" opacity=".2"/><circle cx="947" cy="618" r="40" opacity=".14"/><circle cx="945" cy="648" r="36" opacity=".05"/>
      <circle cx="864" cy="624" r="42" opacity=".26"/><circle cx="840" cy="645" r="40" opacity=".1"/><circle cx="822" cy="662" r="36" opacity=".06"/>
      <circle cx="984" cy="709" r="38" opacity=".32"/><circle cx="994" cy="692" r="40" opacity=".22"/><circle cx="993" cy="783" r="37" opacity=".28"/><circle cx="863" cy="712" r="40" opacity=".2"/>
      <circle cx="1051" cy="640" r="40" opacity=".22"/><circle cx="1074" cy="612" r="38" opacity=".1"/><ellipse cx="1124" cy="688" rx="38" ry="46" opacity=".13"/><circle cx="1150" cy="652" r="40" opacity=".04"/><circle cx="1110" cy="778" r="42" opacity=".06"/><circle cx="1072" cy="685" r="42" opacity=".03"/>
      <ellipse cx="561" cy="884" rx="42" ry="38" opacity=".13"/><circle cx="540" cy="860" r="36" opacity=".03"/><circle cx="742" cy="820" r="40" opacity=".06"/><circle cx="735" cy="640" r="42" opacity=".04"/><circle cx="1035" cy="785" r="38" opacity=".03"/>
      </g>
    </svg>
  </section>
  <i class="vsplit wide"></i>
  <aside class="right">
    <header class="dockhead"><h2>图层样式</h2><button aria-label="浮动"><svg><use href="#i-float"/></svg></button><button aria-label="关闭"><svg><use href="#i-close"/></svg></button></header>
    <div class="combo layerpick"><svg><use href="#i-dots"/></svg><select class="mono" aria-label="图层"><option>2019-02-surrey-street</option></select></div>
    <div class="stylebody">
      <nav class="tabs">
        <button class="sel" aria-label="符号"><svg><use href="#i-paint"/></svg></button>
        <button aria-label="标注"><svg><use href="#i-label"/></svg></button>
        <button aria-label="3D"><svg><use href="#i-cube"/></svg></button>
        <button aria-label="图表"><svg><use href="#i-struct"/></svg></button>
        <button aria-label="历史"><svg><use href="#i-history"/></svg></button>
      </nav>
      <div class="stylepage">
        <div class="combo renderer"><svg viewBox="0 0 16 16"><circle cx="8" cy="8" r="7" fill="url(#g-heat)"/></svg><select aria-label="渲染器"><option>热图</option></select></div>
        <div class="form">
          <span>颜色渐变</span>
          <div class="ramp">
            <button class="rampbtn" aria-label="颜色渐变"></button><button class="rampdrop" aria-label="颜色渐变菜单"></button><i class="mark rampmark"></i>
            <div class="popup" role="menu">
              <button role="menuitem" class="head">反转颜色渐变</button><hr>
              <button role="menuitem"><i class="blues"></i>Blues</button>
              <button role="menuitem"><i class="greens"></i>Greens</button>
              <button role="menuitem"><i class="greys"></i>Greys</button>
              <button role="menuitem"><i class="magma"></i>Magma</button>
              <button role="menuitem"><i class="rdgy"></i>RdGy</button>
              <button role="menuitem" class="hot"><i class="reds"></i>Reds<b class="mark itemmark"></b></button>
              <button role="menuitem"><i class="spectral"></i>Spectral</button>
              <button role="menuitem"><i class="viridis"></i>Viridis</button><hr>
              <button role="menuitem" class="sub">全部颜色渐变</button><hr>
              <button role="menuitem">新建颜色渐变...</button>
              <button role="menuitem">编辑颜色渐变...</button>
              <button role="menuitem">保存颜色渐变...</button>
            </div>
          </div>
          <label for="radius">半径</label>
          <div class="line"><div class="spin"><input id="radius" type="text"><button class="clear" aria-label="清除"><svg viewBox="0 0 14 11"><path d="M0 5.500L4 0h10v11H4z" fill="#999"/><path d="M6 2.500l5 6M11 2.500l-5 6" stroke="#fff"/></svg></button><span class="steps"><button aria-label="增加"></button><button aria-label="减少"></button></span></div>
            <div class="combo unit"><select class="mono" aria-label="单位"><option>Millimeters</option></select></div></div>
          <label for="maxv">最大值</label>
          <div class="line"><div class="spin"><input id="maxv" type="text"><span class="steps low"><button aria-label="增加"></button><button aria-label="减少"></button></span></div></div>
          <label for="weight">权重点由</label>
          <div class="line"><div class="edit"><input id="weight" type="text"><button class="arrow" aria-label="展开"></button></div><button class="btn exprbtn" aria-label="表达式"><svg><use href="#i-eps"/></svg></button></div>
          <label for="quality">渲染质量</label>
          <div class="line quality"><em></em><div class="slider"><input id="quality" type="range" min="0" max="4" value="2"><div class="ticks"><i></i><i></i><i></i><i></i><i></i></div></div><em>最快</em></div>
        </div>
        <button class="section"><b class="big"></b>图层渲染</button>
        <div class="actions">
          <button class="btn" aria-label="撤销"><svg><use href="#i-undo"/></svg></button><button class="btn" aria-label="重做"><svg><use href="#i-redo"/></svg></button>
          <label class="live"><input type="checkbox" checked>实时更新</label><button class="btn apply mono">Apply</button>
        </div>
      </div>
    </div>
  </aside>
</main>

<footer class="status">
  <div class="edit locator"><svg><use href="#i-search"/></svg><input type="text" placeholder="键入以定位(Ctrl+K)" aria-label="定位"></div>
  <label for="coord">坐标</label><div class="edit coord"><input id="coord" class="mono" type="text" value="13974,6660899"></div>
  <svg class="s16 mouse"><use href="#i-mouse"/></svg>
  <label for="scale">比例尺</label><div class="edit scale"><input id="scale" class="mono" type="text" value="1:540381"><button class="arrow" aria-label="展开"></button></div>
  <svg class="lock"><use href="#i-lock"/></svg>
  <label for="mag">放大镜</label><div class="spin mag"><input id="mag" class="mono" type="text" value="100%"><span class="steps"><button aria-label="增加"></button><button aria-label="减少"></button></span></div>
  <label for="rot" class="rotl">旋转角度</label><div class="spin rot"><input id="rot" class="mono" type="text" value="0.0°"><span class="steps"><button aria-label="增加"></button><button aria-label="减少"></button></span></div>
  <label class="render"><input type="checkbox" checked>渲染</label>
  <button class="crs mono"><svg><use href="#i-crs"/></svg>EPSG:3857</button>
  <button class="msg" aria-label="消息"><svg><use href="#i-msg"/></svg></button>
  <span class="watermark">https://blog.csdn.net/QGISClass</span>
</footer>
<i class="edge"></i>
</body>
</html>
```
FILE: styles.css
```css
* { box-sizing: border-box; }
body {
  margin: 0; height: 100vh; display: flex; flex-direction: column; overflow: hidden;
  background: #efefef; color: #000; cursor: default;
  font: 12px/16px "Noto Sans", "Noto Sans CJK SC", sans-serif;
}
button, input, select { font: inherit; color: inherit; margin: 0; padding: 0; border: 0; background: none; }
svg { display: block; flex: none; }
h1, h2 { margin: 0; font: inherit; }
ul { margin: 0; padding: 0; list-style: none; }
i, b { display: block; }
em { display: block; }
.defs { position: absolute; width: 0; height: 0; }
.sprite { display: none; }
.mono { font-family: "Liberation Mono", "Noto Sans CJK SC", monospace; font-size: 10px; }
.s16 { width: 16px; height: 16px; }

.titlebar { flex: none; height: 23px; display: flex; align-items: center; gap: 5px; padding-left: 2px; background: #fff; }
.winctl { margin-left: auto; margin-right: 3px; display: flex; }
.winctl button { width: 45px; height: 21px; display: grid; place-items: center; }
.winctl svg { width: 12px; height: 12px; }
.menubar { flex: none; height: 22px; display: flex; padding-left: 2px; border-bottom: 1px solid #d3d3d3; }
.menubar button { padding: 0 7px 0 8px; line-height: 20px; }
.menubar u { text-underline-offset: 2px; }

.toolbar { flex: none; height: 39px; display: flex; align-items: center; background: linear-gradient(#fafafa, #efefef); border-bottom: 1px solid #b4b4b4; }
.grip { flex: none; width: 16px; height: 17px; padding-left: 8px; background: radial-gradient(circle at 1px 1px, #bbb 0 1px, transparent 1px) 8px 0 / 3px 3px content-box; padding-right: 3px; }
.grip.first { width: 13px; padding-left: 5px; background-position-x: 5px; }
.sep { flex: none; width: 1px; height: 24px; margin: 0 3px; background: #d0d0d0; }
.tool { flex: none; width: 33px; height: 32px; display: flex; align-items: center; padding-left: 4px; }
.tool svg { width: 24px; height: 24px; }
.tool:disabled svg { filter: grayscale(.8); opacity: .35; }
.tool.on { border: 1px solid #a8a8a8; border-radius: 2px; background: #dcdcdc; padding-left: 3px; }
.drop::after { content: ""; margin-left: 5px; border: 4px solid transparent; border-top: 5px solid #555; border-bottom: 0; }
.tool.drop { width: 45px; }
.tool:disabled::after { border-top-color: #a5a5a5; }

.work { flex: 1; min-height: 0; display: flex; }
.left { flex: none; width: 451px; display: flex; flex-direction: column; }
.dockhead { flex: none; height: 19px; display: flex; align-items: center; gap: 3px; padding: 0 2px 0 4px; }
.dockhead h2 { flex: 1; }
.dockhead svg { width: 11px; height: 11px; }
.docktools { flex: none; height: 31px; display: flex; align-items: center; padding: 0 0 1px 3px; }
.docktools button { width: 25px; height: 22px; display: flex; align-items: center; padding-left: 5px; }
.docktools svg { width: 15px; height: 15px; }
.docktools .drop { width: 38px; }
.docktools .on { border: 1px solid #a8a8a8; border-radius: 2px; background: #dcdcdc; }
.treebox { display: flex; border: 1px solid #b4b4b4; background: #fff; height: 248px; }
.tree li { display: flex; align-items: center; height: 19px; white-space: nowrap; }
.treebox .tree { flex: 1; overflow: hidden; }
.tree li > svg { width: 14px; height: 14px; margin: 0 7px 0 5px; }
.l3 { padding-left: 59px; } .l4 { padding-left: 79px; } .l5 { padding-left: 99px; } .l6 { padding-left: 119px; } .l7 { padding-left: 139px; }
.tw { flex: none; width: 20px; height: 8px; background: #555; clip-path: polygon(9px 0, 13px 50%, 9px 100%); }
.tw.open { clip-path: polygon(7px 2px, 15px 2px, 11px 6px); }
.tw.none { background: none; }
.scroll { width: 15px; display: flex; flex-direction: column; background: #e6e6e6; border-left: 1px solid #b4b4b4; }
.scroll button { height: 14px; display: grid; place-items: center; background: #f8f8f8; }
.scroll .up { border-bottom: 1px solid #b4b4b4; }
.scroll .down { border-top: 1px solid #b4b4b4; }
.up::after, .down::after { content: ""; border: 4px solid transparent; border-bottom: 4px solid #555; border-top: 0; }
.down::after { transform: scaleY(-1); }
.before { flex: 49; } .after { flex: 142; }
.thumb { height: 28px; background: #fafafa; border: solid #b4b4b4; border-width: 1px 0; }
.hsplit { flex: none; align-self: center; width: 18px; height: 6px; background: radial-gradient(circle at 1px 1px, #aaa 0 1px, transparent 1px) 0 2px / 3px 3px repeat-x; }
.layers { flex: 1; display: flex; flex-direction: column; }
.layers .docktools .on { width: 24px; padding-left: 4px; margin-right: 1px; }
.layerlist { flex: 1; border: 1px solid #b4b4b4; background: #fff; font-weight: 700; }
.layerlist .current { background: #efefef; }
.layerlist label { flex: 1; display: flex; align-items: center; }
.layerlist svg { width: 13px; height: 13px; margin: 0 7px 0 9px; }
.layerlist li > i { width: 9px; height: 17px; margin-right: 1px; background: #e0e0e0; }
.layerlist .tw { margin-right: 3px; }
input[type="checkbox"] { appearance: none; flex: none; width: 13px; height: 13px; border: 1px solid #aaa; background: #fff; display: grid; place-items: center; }
input[type="checkbox"]:checked::after { content: ""; width: 9px; height: 9px; background: #000; clip-path: polygon(0 45%, 18% 40%, 36% 68%, 80% 0, 100% 0, 45% 100%, 28% 100%); }

.vsplit { flex: none; width: 6px; display: grid; place-items: center; }
.vsplit::after { content: ""; width: 3px; height: 18px; background: radial-gradient(circle at 1px 1px, #aaa 0 1px, transparent 1px) 0 0 / 3px 3px; }
.vsplit.wide { width: 9px; }
.canvas { flex: 1; min-width: 0; border: 1px solid #b4b4b4; background: #fff; overflow: hidden; }
.canvas svg { width: 100%; height: 100%; }

.right { flex: none; width: 665px; display: flex; flex-direction: column; padding-right: 3px; }
.right .dockhead { padding: 0 0 2px 1px; height: 21px; margin-right: -1px; }
.combo { position: relative; display: flex; align-items: center; border: 1px solid #a8a8a8; border-radius: 3px; background: linear-gradient(#fdfdfd, #ececec); }
.combo select { appearance: none; flex: 1; height: 100%; outline: 0; }
.combo::after { content: ""; position: absolute; right: 7px; border: 4px solid transparent; border-top: 4px solid #555; border-bottom: 0; pointer-events: none; }
.combo svg { width: 14px; height: 14px; margin: 0 3px 0 6px; }
.layerpick { height: 25px; margin-bottom: 6px; }
.stylebody { flex: 1; min-height: 0; display: flex; gap: 3px; padding-bottom: 2px; }
.tabs { flex: none; width: 38px; background: #5d5d5d; display: flex; flex-direction: column; }
.tabs button { height: 32px; display: grid; place-items: center; padding-right: 7px; }
.tabs svg { width: 22px; height: 22px; }
.tabs .sel { background: #efefef; padding-right: 2px; }
.stylepage { flex: 1; min-width: 0; display: flex; flex-direction: column; }
.renderer { height: 24px; margin-bottom: 6px; flex: none; }
.renderer svg { width: 16px; height: 16px; margin-left: 4px; }
.form { display: grid; grid-template-columns: 54px 1fr; grid-template-rows: 22px 22px 22px 24px 22px; row-gap: 6px; align-items: center; }
.form > span, .form > label { white-space: nowrap; }
.ramp { position: relative; height: 22px; display: flex; gap: 1px; }
.rampbtn { flex: 1; border: 1px solid #a8a8a8; border-radius: 3px; padding: 2px 4px; background: linear-gradient(90deg, #fff, #000) content-box, #fff; }
.rampdrop { width: 12px; border: 1px solid #a8a8a8; border-radius: 3px; background: #dcdcdc; display: grid; place-items: center; }
.rampdrop::after { content: ""; border: 4px solid transparent; border-top: 4px solid #444; border-bottom: 0; }
.mark { position: absolute; border: 3px solid #ed1c24; pointer-events: none; }
.rampmark { right: -3px; top: -9px; width: 31px; height: 35px; border-right-width: 2px; }
.popup { position: absolute; z-index: 2; left: 0; top: 22px; width: 181px; display: flex; flex-direction: column; border: 1px solid #979797; background: #fff; box-shadow: 3px 3px 3px #0008; }
.popup button { position: relative; height: 25px; display: flex; align-items: center; padding-left: 26px; border: 1px solid transparent; }
.popup .head { height: 24px; }
.popup button i { width: 16px; height: 16px; margin: 0 5px 0 -21px; }
.popup hr { width: 171px; margin: 0 0 0 4px; border: 0; border-top: 1px solid #bdbdbd; }
.popup .head + hr { margin-bottom: 1px; }
.popup .hot { background: #0078d7; border-color: #2a95ee; color: #fff; }
.itemmark { left: -5px; top: -2px; width: 100px; height: 27px; }
.sub::after { content: ""; margin-left: auto; margin-right: 4px; border: 4px solid transparent; border-left: 4px solid #555; border-right: 0; }
.blues { background: linear-gradient(90deg, #f7fbff, #6aaed6, #084594); }
.greens { background: linear-gradient(90deg, #f7fcf5, #73c476, #00551f); }
.greys { background: linear-gradient(90deg, #fafafa, #050505); }
.magma { background: linear-gradient(90deg, #000004, #51127c, #b73779, #fc8961, #fcfdbf); }
.rdgy { background: linear-gradient(90deg, #ca0020, #f4a582, #fff, #bababa, #404040); }
.reds { background: linear-gradient(90deg, #fff5f0, #fb6a4a, #99000d); }
.spectral { background: linear-gradient(90deg, #d7191c, #fdae61, #ffffbf, #abdda4, #2b83ba); }
.viridis { background: linear-gradient(90deg, #440154, #3b528b, #21918c, #5ec962, #fde725); }

.line { display: flex; align-items: center; gap: 6px; }
.spin, .edit { flex: 1; display: flex; align-items: center; height: 21px; border: 1px solid #a8a8a8; border-radius: 3px; background: #fff; overflow: hidden; }
.edit { height: 24px; }
.spin input, .edit input { flex: 1; min-width: 0; height: 100%; outline: 0; }
.clear { width: 14px; margin-right: 8px; }
.steps { width: 15px; height: 100%; border-left: 1px solid #a8a8a8; background: #f6f6f6; display: flex; flex-direction: column; justify-content: center; gap: 3px; align-items: center; }
.steps button { width: 8px; height: 5px; background: #555; clip-path: polygon(0 100%, 50% 0, 100% 100%); }
.steps button + button { clip-path: polygon(0 0, 50% 100%, 100% 0); }
.steps.low button + button { background: #aaa; }
.unit { width: 95px; height: 23px; }
.unit select { padding-left: 3px; font-size: 10px; }
.arrow { flex: none; width: 21px; height: 100%; border-left: 1px solid #a8a8a8; background: #f6f6f6; display: grid; place-items: center; }
.arrow::after { content: ""; border: 4px solid transparent; border-top: 4px solid #555; border-bottom: 0; }
.btn { display: grid; place-items: center; border: 1px solid #a8a8a8; border-radius: 3px; background: linear-gradient(#fdfdfd, #ededed); }
.exprbtn { width: 24px; height: 24px; }
.exprbtn svg { width: 12px; height: 12px; }
.quality { gap: 8px; align-items: flex-start; }
.quality em { width: 24px; line-height: 22px; }
.slider { flex: 1; }
.slider input { display: block; appearance: none; width: 100%; height: 11px; outline: 0; }
.slider input::-webkit-slider-runnable-track { height: 5px; border: 1px solid #b0b0b0; border-radius: 2px; background: linear-gradient(90deg, #1e90f0 50%, #dcdcdc 50%); }
.slider input::-webkit-slider-thumb { appearance: none; width: 13px; height: 13px; margin-top: -5px; border: 1px solid #a8a8a8; border-radius: 3px; background: #fff; }
.ticks { display: flex; justify-content: space-between; padding: 4px 6px 0; }
.ticks i { width: 1px; height: 4px; background: #aaa; }
.section { margin-top: auto; margin-bottom: 9px; display: flex; align-items: center; gap: 10px; padding-left: 5px; font-weight: 700; font-size: 13px; }
.big { width: 7px; height: 11px; background: #333; clip-path: polygon(0 0, 100% 50%, 0 100%); }
.actions { display: flex; align-items: center; gap: 6px; }
.actions .btn { width: 24px; height: 23px; }
.actions svg { width: 15px; height: 15px; }
.live { margin-left: auto; display: flex; align-items: center; gap: 4px; }
.actions .apply { width: 80px; height: 21px; margin-left: 12px; }

.status { flex: none; position: relative; height: 29px; display: flex; align-items: center; padding: 0 4px; white-space: nowrap; }
.status > label { font-size: 11px; margin-right: 3px; }
.status .edit, .status .spin { flex: none; height: 22px; }
.status .spin { height: 20px; }
.locator svg { width: 14px; height: 14px; margin: 0 6px 0 7px; }
.locator { width: 200px; margin-right: auto; }
.locator input::placeholder { color: #888; }
.coord { width: 94px; padding-left: 6px; }
.mouse { margin: 0 12px 0 5px; }
.scale { width: 83px; padding-left: 3px; margin-right: 12px; }
.lock { width: 14px; height: 18px; margin-right: 8px; }
.mag { width: 93px; padding-left: 3px; margin-right: 8px; }
.status > .rotl { margin-right: 8px; }
.rot { width: 89px; padding-left: 3px; margin-right: 7px; }
.render { display: flex; align-items: center; gap: 5px; }
.crs { display: flex; align-items: center; gap: 4px; margin-left: 16px; color: #333; }
.crs svg { width: 14px; height: 14px; }
.msg { margin: 0 3px 0 24px; }
.msg svg { width: 18px; height: 16px; }
.watermark { position: absolute; right: 8px; top: 2px; font-size: 15px; line-height: 20px; color: #fff; opacity: .75; pointer-events: none; }
.edge { flex: none; height: 1px; background: linear-gradient(90deg, #16303a 48px, #c4c4c4 48px 392px, #16303a 392px); }
```
